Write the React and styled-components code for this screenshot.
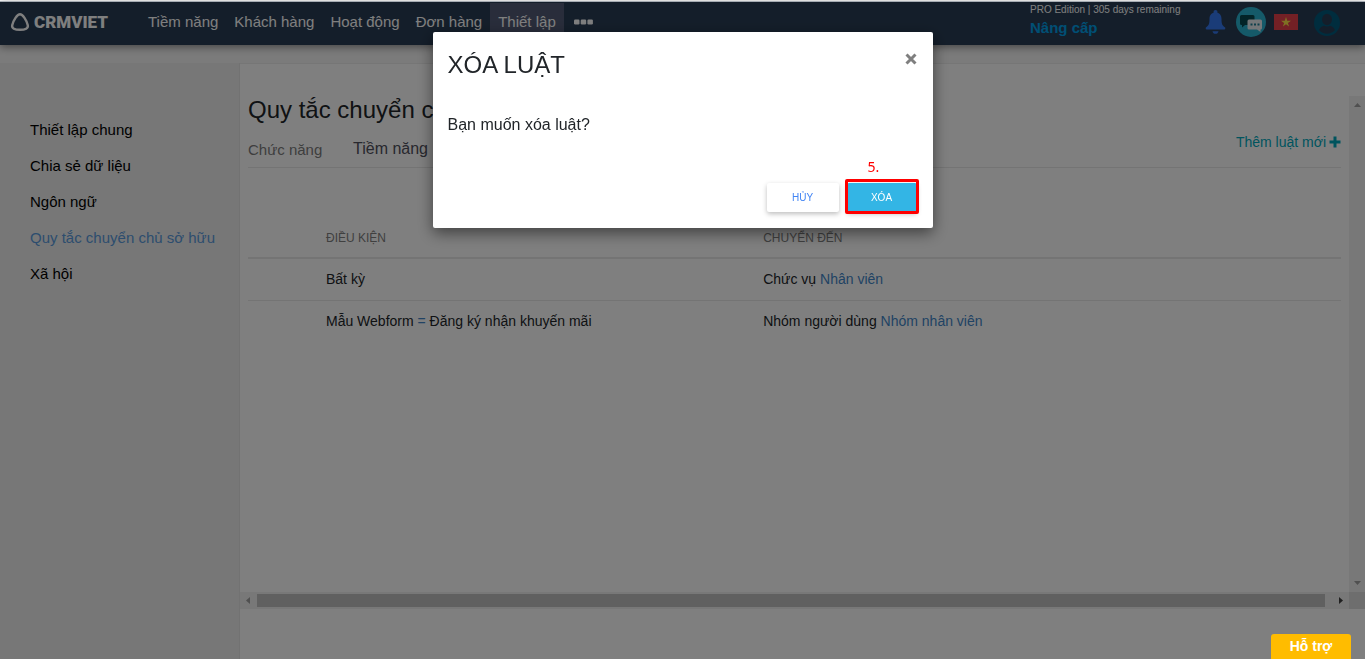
import React from "react";
import styled, { createGlobalStyle } from "styled-components";

const Global = createGlobalStyle`
  * { box-sizing: border-box; }
  body { margin: 0; background: #fff; color: #212529; font-family: "Liberation Sans", Arial, sans-serif; font-size: 15px; overflow: hidden; }
  button { font-family: inherit; cursor: pointer; }
  a { text-decoration: none; }
`;

const Page = styled.div`
  display: flex;
  flex-direction: column;
  height: 100vh;
  min-height: 480px;
  border-top: 1px solid #fff;
`;
const Header = styled.header`
  display: flex;
  align-items: center;
  flex: none;
  height: 44px;
  padding: 0 24px 0 10px;
  border-top: 1px solid #a5abb2;
  background: #293d55;
  color: #fff;
  box-shadow: 0 2px 8px rgba(0, 0, 0, 0.45);
  position: relative;
`;
const Brand = styled.a`
  display: flex;
  align-items: center;
  gap: 4px;
  width: 130px;
  padding-bottom: 4px;
  color: #fff;
  font: 900 17px/20px Roboto, sans-serif;
`;
const Nav = styled.nav`
  display: flex;
  align-items: stretch;
  height: 42px;
  flex: 1;
`;
const NavLink = styled.a`
  display: flex;
  align-items: center;
  padding: 0 8px 4px;
  color: #fff;
  background: ${(p) => (p.$active ? "#525b76" : "transparent")};
`;
const MoreButton = styled.button`
  border: 0;
  padding: 0 10px 4px;
  background: none;
  color: #fff;
  display: flex;
  align-items: center;
`;
const Plan = styled.div`
  display: flex;
  flex-direction: column;
  width: 175px;
  padding-bottom: 6px;
  font-size: 10px;
  line-height: 14px;
`;
const UpgradeLink = styled.a`
  color: #009fe8;
  font-size: 15px;
  font-weight: bold;
  line-height: 22px;
`;
const Tools = styled.div`
  display: flex;
  align-items: center;
  padding-bottom: 3px;
`;
const IconButton = styled.button`
  display: flex;
  border: 0;
  padding: 0;
  background: none;
  margin-left: ${(p) => p.$gap || 0}px;
`;

const Body = styled.div`
  display: flex;
  flex: 1;
  min-height: 0;
  padding-top: 18px;
  background: #f7f7f7;
`;
const Sidebar = styled.aside`
  flex: none;
  width: 240px;
  padding: 49px 30px;
  background: #eeeeee;
  border-right: 1px solid #e4e4e4;
`;
const SideLink = styled.a`
  display: block;
  line-height: 36px;
  white-space: nowrap;
  color: ${(p) => (p.$active ? "#5b9bdd" : "#000")};
`;
const Main = styled.main`
  flex: 1;
  min-width: 0;
  display: flex;
  padding: 32px 0 50px;
  background: #fff;
  border-top: 1px solid #ececec;
`;
const ScrollArea = styled.div`
  flex: 1;
  min-width: 0;
  display: grid;
  grid-template: minmax(0, 1fr) 17px / minmax(0, 1fr) 16px;
`;
const Content = styled.section`
  padding: 0 8px;
  overflow: hidden;
`;
const Title = styled.h1`
  margin: 0;
  font-size: 24px;
  font-weight: 400;
  line-height: 28px;
`;
const Toolbar = styled.div`
  display: flex;
  align-items: center;
  height: 44px;
  border-bottom: 1px solid #e8e8e8;
`;
const Label = styled.span`
  width: 105px;
  padding-top: 8px;
  color: #7d7d7d;
`;
const ModuleButton = styled.button`
  border: 0;
  padding: 6px 0 0;
  background: none;
  color: #50505c;
  font-size: 16px;
`;
const AddLink = styled.a`
  display: flex;
  align-items: center;
  gap: 3px;
  margin-left: auto;
  padding-bottom: 8px;
  color: #00a9bd;
  font-size: 14px;
`;
const Rules = styled.table`
  width: 100%;
  margin-top: 48px;
  table-layout: fixed;
  border-collapse: collapse;
  font-size: 14px;
  text-align: left;
`;
const HeadCell = styled.th`
  width: ${(p) => p.$width || "auto"};
  height: 42px;
  padding: 2px 0 0;
  border-bottom: 2px solid #e8e8e8;
  color: #808080;
  font-size: 12px;
  font-weight: 400;
`;
const Cell = styled.td`
  height: 42px;
  padding: 0;
  border-bottom: ${(p) => (p.$last ? "0" : "1px solid #e8e8e8")};
`;
const TextLink = styled.a`
  color: #4286c8;
`;
const VerticalBar = styled.div`
  display: flex;
  flex-direction: column;
  align-items: center;
  justify-content: space-between;
  padding: 7px 0 7px;
  background: #f0f0f0;
`;
const HorizontalBar = styled.div`
  display: flex;
  align-items: center;
  gap: 7px;
  padding: 0 6px;
  background: #f0f0f0;
`;
const Thumb = styled.div`
  flex: 1;
  height: 13px;
  margin-right: 7px;
  background: #c1c1c1;
`;
const Corner = styled.div`
  background: #dcdcdc;
`;

const Overlay = styled.div`
  position: fixed;
  inset: 2px 0 0;
  display: flex;
  align-items: flex-start;
  justify-content: center;
  padding-top: 30px;
  background: rgba(0, 0, 0, 0.5);
`;
const Dialog = styled.section`
  display: flex;
  flex-direction: column;
  width: 500px;
  max-width: 96vw;
  min-height: 196px;
  padding: 16px 16px 16px 15px;
  border-radius: 2px;
  background: #fff;
  box-shadow: 0 5px 15px rgba(0, 0, 0, 0.5);
`;
const DialogHead = styled.div`
  display: flex;
  justify-content: space-between;
  align-items: flex-start;
`;
const DialogTitle = styled.h2`
  margin: 0;
  font-size: 24px;
  font-weight: 400;
  line-height: 34px;
`;
const CloseButton = styled.button`
  display: flex;
  border: 0;
  padding: 5px 0;
  background: none;
  color: #7f7f7f;
`;
const Message = styled.p`
  margin: 33px 0 0;
  font-size: 16px;
  line-height: 20px;
`;
const Actions = styled.div`
  display: flex;
  justify-content: flex-end;
  gap: 8px;
  margin-top: auto;
`;
const ActionButton = styled.button`
  width: ${(p) => (p.$primary ? 70 : 72)}px;
  height: 29px;
  border: 0;
  border-radius: 2px;
  padding: 0;
  background: ${(p) => (p.$primary ? "#33b5e5" : "#fff")};
  color: ${(p) => (p.$primary ? "#fff" : "#4285f4")};
  font-size: 10px;
  box-shadow: 0 2px 5px rgba(0, 0, 0, 0.26);
`;
const Marked = styled.div`
  position: relative;
  display: flex;
`;
const MarkFrame = styled.div`
  position: absolute;
  inset: -4px -2px -2px;
  border: 3px solid #f00;
  border-radius: 2px;
  pointer-events: none;
`;
const MarkLabel = styled.span`
  position: absolute;
  left: 21px;
  bottom: 36px;
  color: #f00;
  font: 14px/18px "Noto Sans", sans-serif;
`;
const SupportButton = styled.button`
  position: fixed;
  right: 14px;
  bottom: 0;
  width: 80px;
  height: 25px;
  border: 0;
  border-radius: 3px 3px 0 0;
  padding: 0 0 2px;
  background: #ffbc00;
  color: #fff;
  font-size: 14px;
  font-weight: bold;
`;

const Arrow = ({ points, color = "#a0a0a0", w = 7, h = 4 }) => (
  <svg width={w} height={h} viewBox={`0 0 ${w} ${h}`} aria-hidden="true">
    <polygon points={points} fill={color} />
  </svg>
);

const navItems = ["Tiềm năng", "Khách hàng", "Hoạt động", "Đơn hàng", "Thiết lập"];
const sideItems = ["Thiết lập chung", "Chia sẻ dữ liệu", "Ngôn ngữ", "Quy tắc chuyển chủ sở hữu", "Xã hội"];

export default function App() {
  return (
    <>
      <Global />
      <Page>
        <Header>
          <Brand href="#">
            <svg width="20" height="20" viewBox="0 0 20 20" fill="none" stroke="#fff" strokeWidth="2.4" strokeLinejoin="round" aria-hidden="true">
              <path d="M10 2.2C7.300 2.2 3.300 8.200 2.200 13.300C1.600 16.300 4.600 17.800 10 17.800S18.400 16.300 17.800 13.300C16.700 8.200 12.700 2.200 10 2.200Z" />
            </svg>
            CRMVIET
          </Brand>
          <Nav>
            {navItems.map((t) => (
              <NavLink key={t} href="#" $active={t === "Thiết lập"}>{t}</NavLink>
            ))}
            <MoreButton aria-label="More">
              <svg width="19" height="6" viewBox="0 0 19 6" fill="#fff">
                <rect x="0" y="0.500" width="5.500" height="5" rx="1.200" />
                <rect x="6.700" y="0.500" width="5.500" height="5" rx="1.200" />
                <rect x="13.400" y="0.500" width="5.500" height="5" rx="1.200" />
              </svg>
            </MoreButton>
          </Nav>
          <Plan>
            <span>PRO Edition | 305 days remaining</span>
            <UpgradeLink href="#">Nâng cấp</UpgradeLink>
          </Plan>
          <Tools>
            <IconButton aria-label="Notifications">
              <svg width="21" height="24" viewBox="0 0 21 24" fill="#3578f0">
                <circle cx="10.500" cy="2" r="2" />
                <path d="M10.500 2.500c3.900 0 6 2.600 6 6.500 0 4.500.6 6.500 3.300 8.200.9.600.6 2.300-.5 2.300H1.700c-1.100 0-1.400-1.700-.5-2.300C3.900 15.500 4.500 13.500 4.500 9c0-3.900 2.100-6.500 6-6.500zM7.500 21.200h6c-.3 1.700-1.500 2.600-3 2.600s-2.700-.9-3-2.600z" />
              </svg>
            </IconButton>
            <IconButton $gap={10} aria-label="Chat">
              <svg width="30" height="30" viewBox="0 0 30 30">
                <circle cx="15" cy="15" r="15" fill="#2ab4d3" />
                <path d="M5.500 8H17a1.500 1.500 0 0 1 1.500 1.500v7A1.500 1.500 0 0 1 17 18H9l-3 2.500V18h-.5A1.500 1.500 0 0 1 4 16.500v-7A1.500 1.500 0 0 1 5.500 8z" fill="#064950" />
                <path d="M13 12.500h11.500A1.500 1.500 0 0 1 26 14v7a1.500 1.500 0 0 1-1.500 1.500V25L21 22.500h-8a1.500 1.500 0 0 1-1.500-1.500v-7a1.500 1.500 0 0 1 1.500-1.500z" fill="#e9eef2" />
                <path d="M14.500 16.500h2v2h-2zM18 16.500h2v2h-2zM21.500 16.500h2v2h-2z" fill="#1c7f98" />
              </svg>
            </IconButton>
            <IconButton $gap={8} aria-label="Tiếng Việt">
              <svg width="24" height="16" viewBox="0 0 24 16">
                <path d="M0 0h24v16H0z" fill="#e6404a" />
                <path d="M12 3l1.200 3.700H17l-3.100 2.200 1.200 3.700-3.100-2.300-3.100 2.300 1.200-3.700L7 6.700h3.800z" fill="#ffe246" />
              </svg>
            </IconButton>
            <IconButton $gap={15} aria-label="Account">
              <svg width="28" height="28" viewBox="0 0 28 28">
                <circle cx="14" cy="15" r="13" fill="#005a7d" />
                <ellipse cx="14" cy="11.500" rx="5" ry="5.800" fill="#293d55" />
                <path d="M6 22c1.200-2.800 3-4 5-4.300 1.900 1.100 4.100 1.100 6 0 2 .3 3.800 1.500 5 4.300-4.500 5-11.500 5-16 0z" fill="#293d55" />
              </svg>
            </IconButton>
          </Tools>
        </Header>
        <Body>
          <Sidebar>
            {sideItems.map((t, i) => (
              <SideLink key={t} href="#" $active={i === 3}>{t}</SideLink>
            ))}
          </Sidebar>
          <Main>
            <ScrollArea>
              <Content>
                <Title>Quy tắc chuyển chủ sở hữu</Title>
                <Toolbar>
                  <Label>Chức năng</Label>
                  <ModuleButton>Tiềm năng</ModuleButton>
                  <AddLink href="#">
                    Thêm luật mới
                    <svg width="12" height="12" viewBox="0 0 12 12" fill="#00a9bd" aria-hidden="true">
                      <path d="M4.500 .5h3v4H11.500v3h-4v4h-3v-4H.5v-3h4z" />
                    </svg>
                  </AddLink>
                </Toolbar>
                <Rules>
                  <thead>
                    <tr>
                      <HeadCell $width="78px" />
                      <HeadCell $width="40%">ĐIỀU KIỆN</HeadCell>
                      <HeadCell>CHUYỂN ĐẾN</HeadCell>
                    </tr>
                  </thead>
                  <tbody>
                    <tr>
                      <Cell />
                      <Cell>Bất kỳ</Cell>
                      <Cell>Chức vụ <TextLink href="#">Nhân viên</TextLink></Cell>
                    </tr>
                    <tr>
                      <Cell $last />
                      <Cell $last>Mẫu Webform <TextLink as="span">=</TextLink> Đăng ký nhận khuyến mãi</Cell>
                      <Cell $last>Nhóm người dùng <TextLink href="#">Nhóm nhân viên</TextLink></Cell>
                    </tr>
                  </tbody>
                </Rules>
              </Content>
              <VerticalBar>
                <Arrow points="0,4 3.500,0 7,4" />
                <Arrow points="0,0 3.500,4 7,0" />
              </VerticalBar>
              <HorizontalBar>
                <Arrow points="4,0 0,3.500 4,7" color="#a0a0a0" w={4} h={7} />
                <Thumb />
                <Arrow points="0,0 4,3.500 0,7" color="#404040" w={4} h={7} />
              </HorizontalBar>
              <Corner />
            </ScrollArea>
          </Main>
        </Body>
      </Page>
      <Overlay>
        <Dialog role="dialog" aria-labelledby="dialog-title">
          <DialogHead>
            <DialogTitle id="dialog-title">XÓA LUẬT</DialogTitle>
            <CloseButton aria-label="Close">
              <svg width="12" height="12" viewBox="0 0 12 12" stroke="currentColor" strokeWidth="3">
                <path d="M1.500 1.500l9 9M10.500 1.500l-9 9" />
              </svg>
            </CloseButton>
          </DialogHead>
          <Message>Bạn muốn xóa luật?</Message>
          <Actions>
            <ActionButton>HỦY</ActionButton>
            <Marked>
              <ActionButton $primary>XÓA</ActionButton>
              <MarkFrame />
              <MarkLabel>5.</MarkLabel>
            </Marked>
          </Actions>
        </Dialog>
      </Overlay>
      <SupportButton>Hỗ trợ</SupportButton>
    </>
  );
}
